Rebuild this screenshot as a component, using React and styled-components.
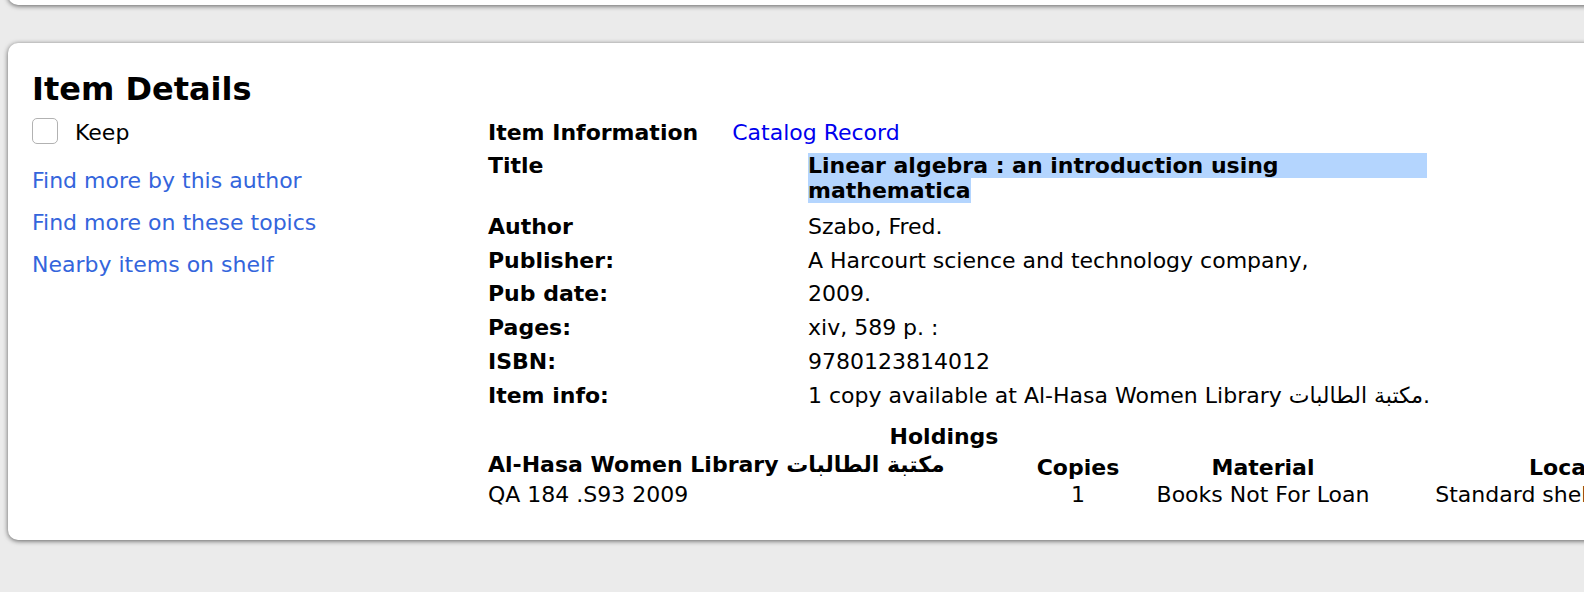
import React from 'react';
import styled, { createGlobalStyle } from 'styled-components';

const GlobalStyle = createGlobalStyle`
  html, body {
    margin: 0;
    padding: 0;
    background: #ebebeb;
    overflow: hidden;
  }
  body {
    font-family: "DejaVu Sans", Verdana, sans-serif;
    font-size: 22px;
    color: #000;
  }
`;

const Page = styled.div`
  width: 1760px;
  padding: 0 0 60px 8px;
`;

const Panel = styled.div`
  width: 1720px;
  background: #fff;
  border-radius: 10px;
  box-shadow: 0 1px 5px rgba(0, 0, 0, 0.6);
`;

const TopPanel = styled(Panel)`
  height: 60px;
  margin-top: -55px;
`;

const Card = styled(Panel)`
  margin-top: 38px;
  padding: 28px 0 33px 24px;
  box-sizing: border-box;
`;

const Heading = styled.h2`
  margin: 0 0 11px;
  font-size: 32px;
  line-height: 36px;
  font-weight: bold;
`;

const Columns = styled.div`
  display: flex;
  align-items: flex-start;
`;

const Sidebar = styled.div`
  width: 456px;
  flex: none;
`;

const KeepRow = styled.label`
  display: flex;
  align-items: flex-start;
`;

const Checkbox = styled.span`
  width: 26px;
  height: 26px;
  box-sizing: border-box;
  border: 1px solid #b2b2b2;
  border-radius: 5px;
  background: #fff;
`;

const KeepLabel = styled.span`
  margin: 2px 0 0 17px;
  line-height: 25px;
`;

const LinkList = styled.nav`
  display: flex;
  flex-direction: column;
  gap: 17px;
  margin-top: 23px;
`;

const SideLink = styled.a`
  line-height: 25px;
  color: #3465dc;
  text-decoration: none;
`;

const Main = styled.div`
  flex: none;
  width: 1276px;
  padding-top: 2px;
`;

const InfoHeader = styled.div`
  display: flex;
  line-height: 25px;
`;

const InfoTitle = styled.span`
  font-weight: bold;
`;

const CatalogLink = styled.a`
  margin-left: 34px;
  color: #0000ee;
  text-decoration: none;
`;

const DetailGrid = styled.div`
  display: grid;
  grid-template-columns: 320px 619px;
  row-gap: 8.8px;
  margin-top: 8px;
  line-height: 25px;
`;

const Label = styled.div`
  font-weight: bold;
`;

const Value = styled.div`
  white-space: ${(p) => (p.$tall ? 'normal' : 'nowrap')};
  padding-bottom: ${(p) => (p.$tall ? '2px' : '0')};
`;

const SelectedLine = styled.div`
  font-weight: bold;
  background: #b4d5fe;
`;

const SelectedTail = styled.span`
  font-weight: bold;
  background: #b4d5fe;
`;

const HoldingsGrid = styled.div`
  display: grid;
  grid-template-columns: 542px 96px 274px 364px;
  margin-top: 16px;
  line-height: 25px;
`;

const Caption = styled.div`
  grid-column: 1 / 4;
  grid-row: 1;
  padding-bottom: 3px;
  text-align: center;
  font-weight: bold;
`;

const HeadCell = styled.div`
  grid-row: 2;
  font-weight: bold;
  text-align: ${(p) => (p.$left ? 'left' : 'center')};
  white-space: nowrap;
  padding: ${(p) => (p.$left ? '0 0 5px' : '3px 0 2px')};
`;

const Cell = styled.div`
  grid-row: 3;
  text-align: ${(p) => (p.$left ? 'left' : 'center')};
  white-space: nowrap;
`;

const details = [
  ['Author', 'Szabo, Fred.'],
  ['Publisher:', 'A Harcourt science and technology company,'],
  ['Pub date:', '2009.'],
  ['Pages:', 'xiv, 589 p. :'],
  ['ISBN:', '9780123814012'],
  ['Item info:', '1 copy available at Al-Hasa Women Library مكتبة الطالبات.'],
];

export default function App() {
  return (
    <>
      <GlobalStyle />
      <Page>
        <TopPanel />
        <Card>
          <Heading>Item Details</Heading>
          <Columns>
            <Sidebar>
              <KeepRow>
                <Checkbox />
                <KeepLabel>Keep</KeepLabel>
              </KeepRow>
              <LinkList>
                <SideLink href="#">Find more by this author</SideLink>
                <SideLink href="#">Find more on these topics</SideLink>
                <SideLink href="#">Nearby items on shelf</SideLink>
              </LinkList>
            </Sidebar>
            <Main>
              <InfoHeader>
                <InfoTitle>Item Information</InfoTitle>
                <CatalogLink href="#">Catalog Record</CatalogLink>
              </InfoHeader>
              <DetailGrid>
                <Label>Title</Label>
                <Value $tall>
                  <SelectedLine>Linear algebra : an introduction using</SelectedLine>
                  <SelectedTail>mathematica</SelectedTail>
                </Value>
                {details.map(([label, value]) => (
                  <React.Fragment key={label}>
                    <Label>{label}</Label>
                    <Value>{value}</Value>
                  </React.Fragment>
                ))}
              </DetailGrid>
              <HoldingsGrid>
                <Caption>Holdings</Caption>
                <HeadCell $left>Al-Hasa Women Library مكتبة الطالبات</HeadCell>
                <HeadCell>Copies</HeadCell>
                <HeadCell>Material</HeadCell>
                <HeadCell>Location</HeadCell>
                <Cell $left>QA 184 .S93 2009</Cell>
                <Cell>1</Cell>
                <Cell>Books Not For Loan</Cell>
                <Cell>Standard shelving location</Cell>
              </HoldingsGrid>
            </Main>
          </Columns>
        </Card>
      </Page>
    </>
  );
}
